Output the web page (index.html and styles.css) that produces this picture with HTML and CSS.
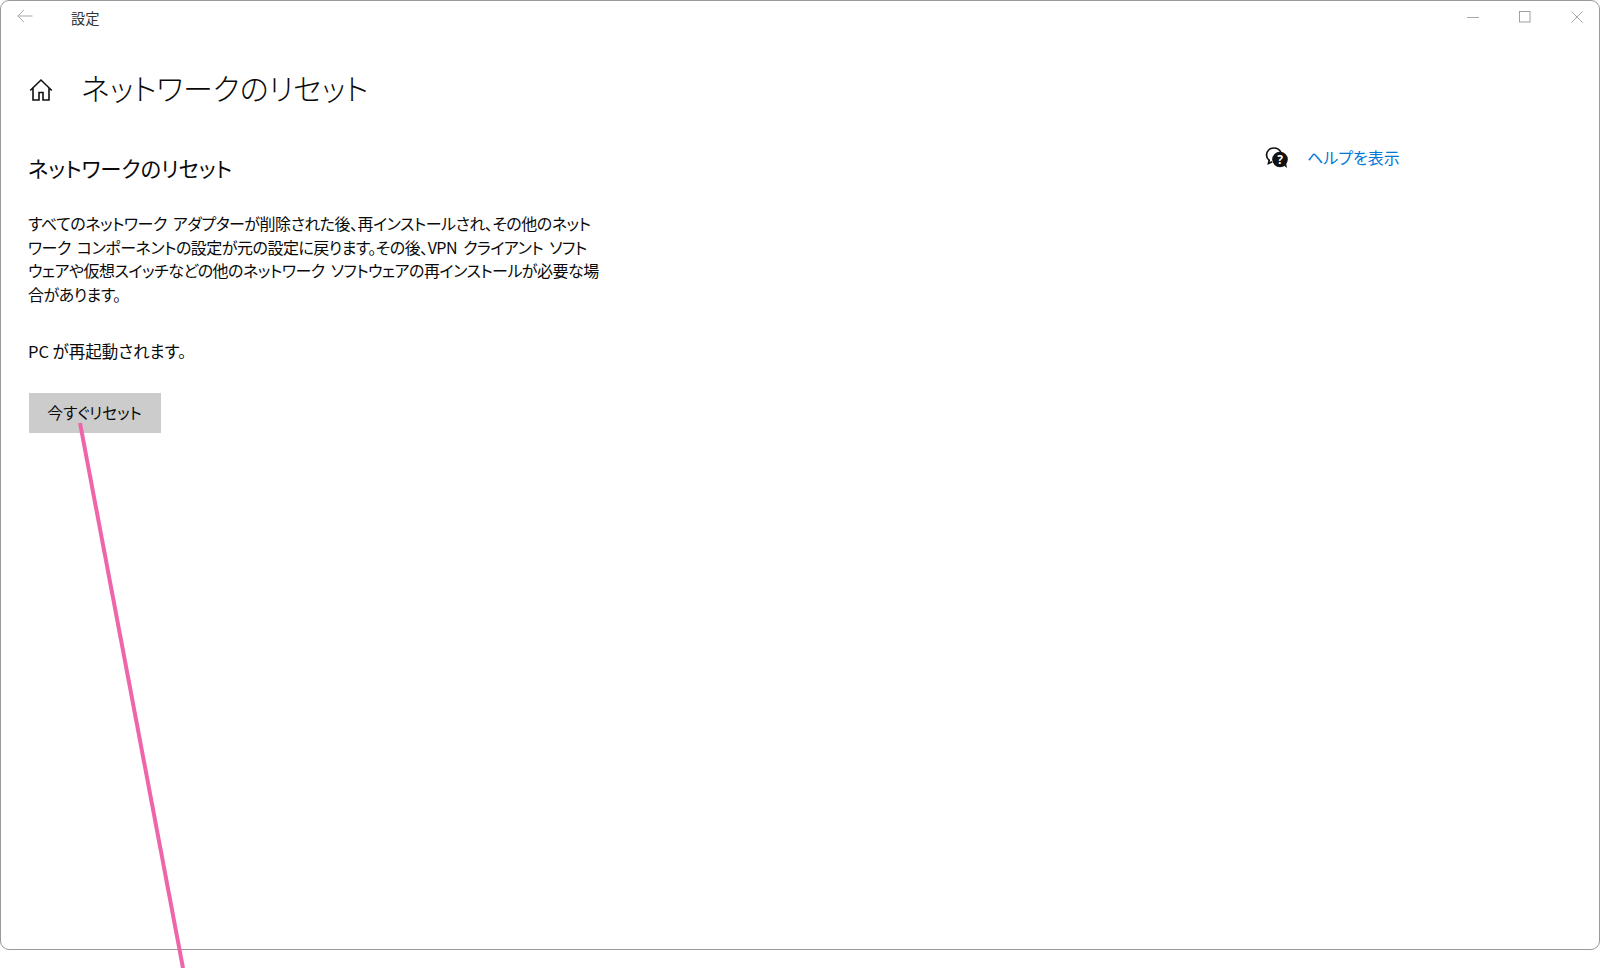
FILE: index.html
```html
<!DOCTYPE html>
<html lang="ja">
<head>
<meta charset="utf-8">
<title>設定</title>
<link rel="stylesheet" href="styles.css">
</head>
<body>
<div class="window">
  <header class="titlebar">
    <svg class="back" viewBox="0 0 16 14" width="16" height="14"><path d="M15.500 7H1M7 .8 .9 7 7 13.200" fill="none" stroke="#a8a8a8" stroke-width="1"/></svg>
    <span class="apptitle">設定</span>
    <div class="controls">
      <svg viewBox="0 0 12 12" width="12" height="12"><path d="M0 6.500h12" stroke="#a8a8a8" stroke-width="1" fill="none"/></svg>
      <svg viewBox="0 0 12 12" width="12" height="12"><rect x=".5" y=".5" width="10.500" height="10.500" stroke="#a0a0a0" stroke-width="1" fill="none"/></svg>
      <svg viewBox="0 0 12 12" width="12" height="12"><path d="M.5.5 11.500 11.500M11.500.5 .5 11.500" stroke="#a8a8a8" stroke-width="1" fill="none"/></svg>
    </div>
  </header>
  <div class="pagehead">
    <svg class="home" viewBox="0 0 24 24" width="24" height="24"><path d="M1.200 12.500 12 2l10.800 10.500M4 10v12h6v-7.500h4V22h6V10" fill="none" stroke="#111" stroke-width="1.600"/></svg>
    <h1>ネットワークのリセット</h1>
  </div>
  <div class="content">
    <main class="main">
      <h2>ネットワークのリセット</h2>
      <p class="desc">すべてのネットワーク アダプターが削除された後、再インストールされ、その他のネット<br>ワーク コンポーネントの設定が元の設定に戻ります。その後、VPN クライアント ソフト<br>ウェアや仮想スイッチなどの他のネットワーク ソフトウェアの再インストールが必要な場<br>合があります。</p>
      <p class="restart">PC が再起動されます。</p>
      <button class="reset">今すぐリセット</button>
    </main>
    <aside class="help">
      <svg viewBox="0 0 24 24" width="24" height="24"><path d="M16 6.500C14.600 3.600 12 2 9 2 4.800 2 1.500 5 1.500 9c0 2.200 1 4 2.700 5.300L3.500 17.500l3.700-1.700" fill="none" stroke="#111" stroke-width="1.700"/><circle cx="15" cy="13.500" r="7.800" fill="#111"/><path d="M19 19.500l3 2.500-1-5z" fill="#111"/><text x="15" y="17.600" class="q">?</text></svg>
      <a class="helplink">ヘルプを表示</a>
    </aside>
  </div>
</div>
<svg class="annotation" viewBox="0 0 1600 968" width="1600" height="968"><path d="M80 423 183 968" stroke="#ee66a9" stroke-width="4" fill="none"/></svg>
</body>
</html>
```
FILE: styles.css
```css
* { box-sizing: border-box; }
html, body { margin: 0; padding: 0; background: #fff; }
body {
  width: 1600px;
  height: 968px;
  overflow: hidden;
  position: relative;
  font-family: "Noto Sans CJK JP", "Noto Sans", sans-serif;
  font-feature-settings: "palt";
  color: #0a0a0a;
}
.window {
  width: 1600px;
  height: 950px;
  border: 1.500px solid #9a9a9a;
  border-radius: 9px;
  background: #fff;
  display: flex;
  flex-direction: column;
}
.titlebar {
  display: flex;
  align-items: center;
  height: 32px;
  padding: 0 16px;
  flex: none;
}
.back { margin-right: 38px; margin-top: -3px; }
.apptitle { font-size: 14.300px; color: #333; margin-top: 0; }
.controls { margin-left: auto; display: flex; gap: 40px; margin-top: -1px; }
.pagehead {
  display: flex;
  align-items: center;
  padding: 28px 0 0 28px;
  flex: none;
}
.home { margin-top: 6px; }
h1 {
  font-size: 30px;
  font-weight: 300;
  margin: 0 0 0 28px;
  line-height: 52px;
  letter-spacing: 0;
}
.content {
  display: flex;
  flex: 1;
  padding-left: 27px;
}
.main { width: 600px; }
h2 {
  font-size: 21.300px;
  font-weight: 400;
  margin: 37px 0 0;
  line-height: 36px;
}
.desc {
  font-size: 16px;
  letter-spacing: -0.5px;
  word-spacing: 3px;
  line-height: 23.700px;
  margin: 26px 0 0;
  white-space: nowrap;
}
.restart {
  font-size: 16.500px;
  line-height: 24px;
  margin: 32px 0 0;
}
.reset {
  display: block;
  margin: 30px 0 0 0.500px;
  width: 132px;
  height: 40px;
  background: #cccccc;
  border: 0;
  font: inherit;
  font-size: 15.800px;
  color: #0a0a0a;
  padding: 0;
}
.help {
  display: flex;
  align-items: center;
  margin: 28px 0 0 637px;
  height: 32px;
}
.help svg { margin: 2px 18px 0 0; }
.q { font-size: 12px; font-weight: 700; fill: #fff; text-anchor: middle; font-family: "Noto Sans", sans-serif; }
.helplink { font-size: 16px; color: #0078d7; }
.annotation { position: absolute; left: 0; top: 0; pointer-events: none; }
```
